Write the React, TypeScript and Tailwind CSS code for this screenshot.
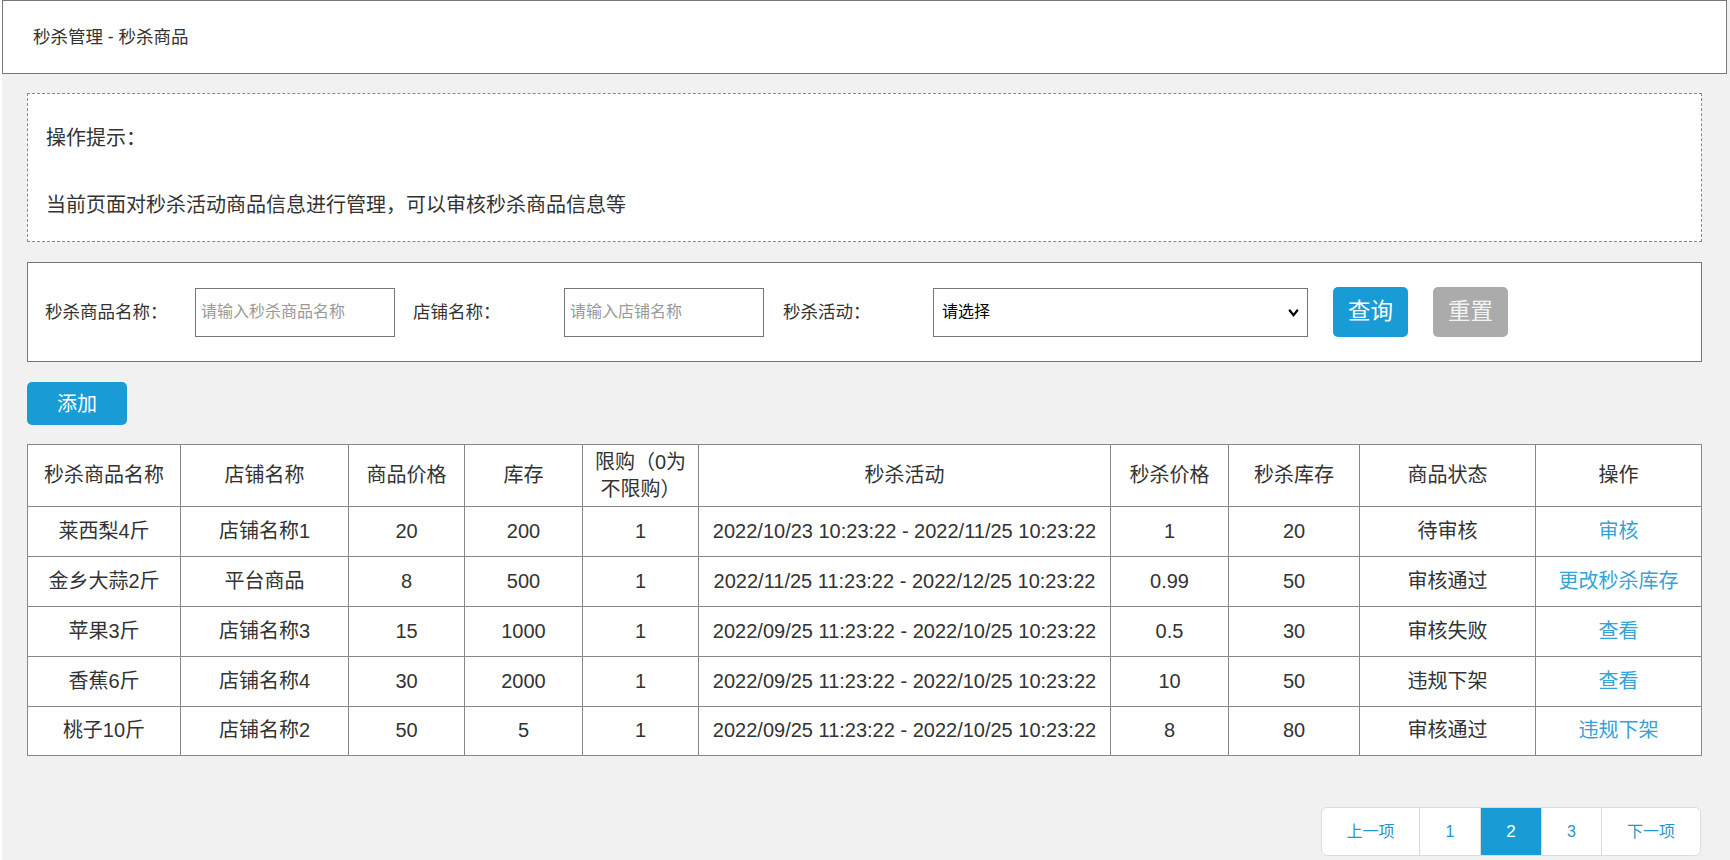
import React from "react";

const FONT = '"Liberation Sans", "Noto Sans CJK SC", sans-serif';

const cols = [153, 168, 116, 118, 116, 412, 118, 131, 176, 166];

const headers = ["秒杀商品名称", "店铺名称", "商品价格", "库存", "限购（0为不限购）", "秒杀活动", "秒杀价格", "秒杀库存", "商品状态", "操作"];

const rows = [
  ["莱西梨4斤", "店铺名称1", "20", "200", "1", "2022/10/23 10:23:22 - 2022/11/25 10:23:22", "1", "20", "待审核", "审核"],
  ["金乡大蒜2斤", "平台商品", "8", "500", "1", "2022/11/25 11:23:22 - 2022/12/25 10:23:22", "0.99", "50", "审核通过", "更改秒杀库存"],
  ["苹果3斤", "店铺名称3", "15", "1000", "1", "2022/09/25 11:23:22 - 2022/10/25 10:23:22", "0.5", "30", "审核失败", "查看"],
  ["香蕉6斤", "店铺名称4", "30", "2000", "1", "2022/09/25 11:23:22 - 2022/10/25 10:23:22", "10", "50", "违规下架", "查看"],
  ["桃子10斤", "店铺名称2", "50", "5", "1", "2022/09/25 11:23:22 - 2022/10/25 10:23:22", "8", "80", "审核通过", "违规下架"],
];

export default function App() {
  return (
    <div className="bg-white w-[1730px] min-h-[860px] flex" style={{ fontFamily: FONT }}>
      <div className="ml-[2px] w-[1728px] min-h-[860px] bg-[#f1f1f1] text-[#333]">
        {/* header */}
        <div className="w-[1725px] h-[74px] bg-white border border-[#777] flex items-center pl-[30px] text-[17.5px]">
          秒杀管理 - 秒杀商品
        </div>

        <div className="pl-[25px] w-[1700px]">
          {/* tips */}
          <div className="mt-[19px] h-[149px] bg-white border border-dashed border-[#888] pl-[18px] pt-[29px] text-[20px]">
            <p className="leading-[30px]">操作提示：</p>
            <p className="leading-[30px] mt-[37px]">当前页面对秒杀活动商品信息进行管理，可以审核秒杀商品信息等</p>
          </div>

          {/* search */}
          <div className="mt-[20px] h-[100px] bg-white border border-[#777] flex items-center pl-[17px]">
            <div className="w-[150px] text-[17.5px]">秒杀商品名称：</div>
            <div className="w-[200px] h-[49px] border border-[#777] flex items-center pl-[5px] text-[16px] text-[#999]">
              请输入秒杀商品名称
            </div>
            <div className="ml-[18px] w-[151px] text-[17.5px]">店铺名称：</div>
            <div className="w-[200px] h-[49px] border border-[#777] flex items-center pl-[5px] text-[16px] text-[#999]">
              请输入店铺名称
            </div>
            <div className="ml-[19px] w-[150px] text-[17.5px]">秒杀活动：</div>
            <div className="w-[375px] h-[49px] border border-[#777] flex items-center justify-between pl-[8px] pr-[7px] text-[16px] text-black">
              <span>请选择</span>
              <svg width="13" height="13" viewBox="0 0 12 12">
                <path d="M2 3.5 L6 8.5 L10 3.5" fill="none" stroke="#000" strokeWidth="2" />
              </svg>
            </div>
            <button className="ml-[25px] w-[75px] h-[50px] rounded-[5px] bg-[#199cd6] text-white text-[22.5px] flex items-center justify-center">
              查询
            </button>
            <button className="ml-[25px] w-[75px] h-[50px] rounded-[5px] bg-[#ababab] text-[#f3f3f3] text-[22.5px] flex items-center justify-center">
              重置
            </button>
          </div>

          {/* add button */}
          <button className="mt-[20px] w-[100px] h-[43px] rounded-[5px] bg-[#199cd6] text-white text-[20px] flex items-center justify-center">
            添加
          </button>

          {/* table */}
          <table className="mt-[19px] w-[1674px] table-fixed border-collapse bg-white text-[20px] text-[#333]">
            <colgroup>
              {cols.map((w, i) => (
                <col key={i} style={{ width: w }} />
              ))}
            </colgroup>
            <thead>
              <tr className="h-[62px]">
                {headers.map((h, i) => (
                  <th key={i} className="border border-[#888] font-normal text-center px-[8px] leading-[27px]">
                    {h}
                  </th>
                ))}
              </tr>
            </thead>
            <tbody>
              {rows.map((r, ri) => (
                <tr key={ri} className={ri === rows.length - 1 ? "h-[49px]" : "h-[50px]"}>
                  {r.map((c, ci) => (
                    <td
                      key={ci}
                      className={
                        "border border-[#888] text-center whitespace-nowrap pb-[2px] " +
                        (ci === 9 ? "text-[#35a3d8]" : "")
                      }
                    >
                      {c}
                    </td>
                  ))}
                </tr>
              ))}
            </tbody>
          </table>

          {/* pagination */}
          <div className="mt-[51px] flex justify-end w-[1674px]">
            <div className="flex h-[49px] border border-[#dcdcdc] rounded-[6px] overflow-hidden bg-white text-[16px] text-[#1e96d2]">
              <div className="w-[98px] flex items-center justify-center border-r border-[#dcdcdc]">上一项</div>
              <div className="w-[61px] flex items-center justify-center border-r border-[#dcdcdc]">1</div>
              <div className="w-[60px] flex items-center justify-center bg-[#199cd6] text-white text-[17px]">2</div>
              <div className="w-[61px] flex items-center justify-center border-l border-r border-[#dcdcdc]">3</div>
              <div className="w-[98px] flex items-center justify-center">下一项</div>
            </div>
          </div>
        </div>
      </div>
    </div>
  );
}
